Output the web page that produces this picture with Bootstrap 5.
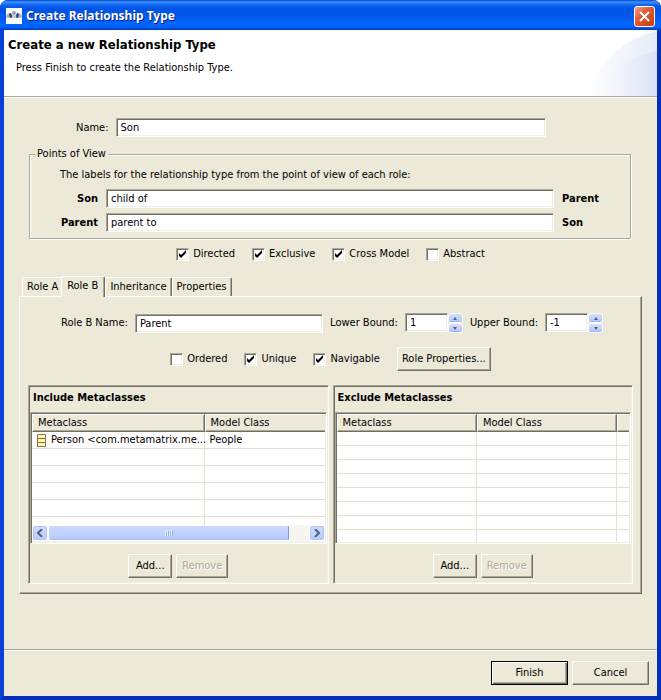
<!DOCTYPE html>
<html lang="en">
<head>
<meta charset="utf-8">
<meta name="viewport" content="width=device-width, initial-scale=1">
<title>Create Relationship Type</title>
<link rel="stylesheet" href="https://cdn.jsdelivr.net/npm/bootstrap@5.3.0/dist/css/bootstrap.min.css">
<style>
:root { --face: #ece9d8; --dark: #716f64; --mid: #aca899; --rule: #e4e1d4; }
body { font: 11px/14px Tahoma, "DejaVu Sans Condensed", "DejaVu Sans", sans-serif; color: #000; background: #fff; }
.dialog-window { background: var(--face); border: 4px solid #0842d4; border-top: 0; border-right-color: #0230b8; border-bottom-color: #0230b8; border-radius: 8px 8px 0 0; }
.title-bar { height: 30px; margin: 0 -4px; padding: 2px 6px 0; border-radius: 8px 8px 0 0; color: #fff;
  background: linear-gradient(#0842c8 0, #3a93ff 2px, #0a63f0 5px, #0054e3 9px, #0058ee 16px, #0066ff 24px, #0162f8 27px, #0038c0 30px); }
.title-bar h1 { font: bold 13px/18px "Noto Sans", "Open Sans", sans-serif; font-size: 12px; text-shadow: 1px 1px #0a1e8c; }
.app-icon { width: 16px; height: 16px; }
.close-button { width: 21px; height: 21px; border: 1px solid #fff; border-radius: 3px; background: linear-gradient(135deg, #f0a48c, #e25a35 40%, #c83a10); }
.banner { height: 68px; padding: 7px 4px; background: #fff; border-bottom: 1px solid #fff; box-shadow: inset 0 -1px var(--mid); }
.banner h2 { font-size: 13px; line-height: 16px; font-weight: bold; }
.banner p { padding-left: 8px; }
.banner-art { right: 0; top: 0; width: 70px; height: 66px; }
.edge { border: 1px solid; border-color: var(--mid) #fff #fff var(--mid); box-shadow: inset 1px 1px var(--dark), inset -1px -1px #f1efe2; }
.field { height: 19px; min-height: 0; padding: 0 4px; font-size: 11px; line-height: 14px; color: #000; background: #fff; border-radius: 0; }
.field:focus { color: #000; border-color: var(--mid) #fff #fff var(--mid); box-shadow: inset 1px 1px var(--dark); }
.name-row { padding: 20px 111px 0 72px; gap: 7px; }
.view-box { margin: 10px 26px 0 25px; padding: 7px 7px 6px 30px; border: 1px solid var(--mid); box-shadow: 1px 1px #fff, inset 1px 1px #fff; }
.view-box legend { float: none; width: auto; margin: 0 0 0 -25px; padding: 0 2px; font-size: 11px; line-height: 14px; background: var(--face); }
.view-grid { display: grid; grid-template-columns: 38px 1fr 61px; gap: 5px 8px; align-items: center; padding-top: 7px; }
.tick { appearance: none; width: 13px; height: 13px; margin: 0; background: #fff center/9px 9px no-repeat; }
.tick:checked { background-image: url("data:image/svg+xml,%3Csvg xmlns='http://www.w3.org/2000/svg' viewBox='0 0 9 9'%3E%3Cpath d='M1 3v3l2 2 5-5V0L3 5z'/%3E%3C/svg%3E"); }
.tick-row { gap: 17px; }
.tick-row label { gap: 4px; }
.tabs { height: 20px; margin: 15px 16px 0; padding-left: 2px; }
.tab { height: 19px; padding: 0 4px; border: 1px solid #fff; border-right: 1px solid var(--dark); border-bottom: 0; border-radius: 2px 2px 0 0; background: var(--face); color: #000; box-shadow: inset -1px 0 var(--mid); }
.tab.active { height: 21px; margin: 0 0 -1px -1px; padding: 0 6px 2px 5px; z-index: 1; }
.tab.before-active { border-right: 0; box-shadow: none; }
.tab-panel { margin: 0 15px; padding: 16px 8px 9px; border: 1px solid; border-color: #fff var(--dark) var(--dark) #fff; box-shadow: inset -1px -1px var(--mid); }
.role-row { padding: 0 30px 0 33px; gap: 7px; }
.bound { width: 43px; }
.spin { width: 15px; height: 10px; border: 1px solid #fff; border-radius: 3px; background: linear-gradient(#d4dffc, #b4c7f8); box-shadow: inset 0 -1px #9db4ee; }
.push { height: 24px; padding: 0 4px; font-size: 11px; line-height: 14px; color: #000; background: var(--face); border: 1px solid; border-color: #fff var(--dark) var(--dark) #fff; border-radius: 0; box-shadow: inset -1px -1px var(--mid); }
.push:hover, .push:active { color: #000; background: var(--face); border-color: #fff var(--dark) var(--dark) #fff; }
.push:disabled { color: var(--mid); opacity: 1; background: var(--face); border-color: #fff var(--dark) var(--dark) #fff; text-shadow: 1px 1px #fff; }
.push.main { border-color: #000; box-shadow: inset 1px 1px #fff, inset -1px -1px var(--dark), inset -2px -2px var(--mid); }
.push.wide { width: 77px; }
.push.add { width: 44px; } .push.remove { width: 52px; }
.role-options { padding-top: 14px; }
.groups { display: grid; grid-template-columns: 1fr 1fr; gap: 4px; margin-top: 14px; }
.group { padding: 2px 1px 5px; min-width: 0; }
.group h3 { margin: 3px 3px 7px; font-size: 11px; line-height: 14px; font-weight: bold; }
.sheet { height: 132px; padding: 1px; background: #fff; overflow: hidden; }
.sheet table { table-layout: fixed; width: 100%; border-collapse: separate; border-spacing: 0; }
.sheet th { height: 18px; padding: 0 0 0 5px; font-weight: normal; line-height: 14px; background: var(--face); border: 1px solid; border-color: #fff var(--dark) var(--dark) #fff; box-shadow: inset -1px -1px var(--mid); }
.sheet th:last-child { border-right: 0; box-shadow: inset 0 -1px var(--mid); }
.sheet td { height: 14px; padding: 0 2px 0 5px; line-height: 13px; border-right: 1px solid var(--rule); border-bottom: 1px solid var(--rule); }
.sheet td:last-child { border-right: 0; }
.sheet.tall td { height: 17px; line-height: 16px; }
.rows { flex: 1; min-height: 0; overflow: hidden; }
.bar { height: 17px; background: #f6f5f0; }
.bar-arrow { width: 16px; height: 16px; border: 1px solid #fff; border-radius: 3px; background: linear-gradient(#d0dcfd, #b8cbf9); box-shadow: inset 0 0 0 1px #b2c4f5; }
.bar-thumb { width: 241px; height: 16px; border: 1px solid #fff; border-right-color: #7d9be0; border-radius: 3px; background: linear-gradient(#cbd9fd, #bccdfb 80%, #a8bdf2); }
.actions { gap: 4px; padding-top: 10px; }
.footer-bar { padding: 11px 8px; gap: 4px; border-top: 1px solid var(--mid); box-shadow: inset 0 1px #fff; }
</style>
<script src="https://cdn.jsdelivr.net/npm/bootstrap@5.3.0/dist/js/bootstrap.bundle.min.js"></script>
</head>
<body>
<main class="dialog-window d-flex flex-column min-vh-100">
  <header class="title-bar d-flex align-items-center">
    <svg class="app-icon flex-shrink-0" viewBox="0 0 16 16" aria-hidden="true"><path fill="#fff" d="M0 0h16v16H0z"/><path fill="#b4bcc6" d="M0 9q0-3 3-4h2l1 5H1zM16 9q0-3-3-4h-2l-1 5h5z"/><circle cx="8" cy="5" r="2" fill="#98a3b0"/><path fill="#c5cbd2" d="M6 7h4v3H6z"/><path fill="#2d437c" d="M4 5q2 0 2 4l-1 1q-2-1-2-3zM12 5q-2 0-2 4l1 1q2-1 2-3z"/></svg>
    <h1 class="flex-grow-1 mb-0 ms-1">Create Relationship Type</h1>
    <button class="close-button p-0 d-flex align-items-center justify-content-center" type="button" aria-label="Close"><svg width="13" height="13" viewBox="0 0 13 13"><path d="M2 2l9 9M11 2l-9 9" stroke="#fff" stroke-width="2"/></svg></button>
  </header>
  <section class="banner position-relative">
    <svg class="banner-art position-absolute" viewBox="0 0 70 66" preserveAspectRatio="none" aria-hidden="true"><defs><linearGradient id="fade"><stop offset="0" stop-color="#fff"/><stop offset="1" stop-color="#e5ebf8"/></linearGradient><linearGradient id="fade2"><stop offset="0" stop-color="#fff" stop-opacity="0"/><stop offset="1" stop-color="#d8e1f5"/></linearGradient></defs><path fill="url(#fade)" d="M0 66Q20 12 70 1v65z"/><path fill="url(#fade2)" d="M0 66Q28 28 70 21v45z"/></svg>
    <h2 class="mb-0 position-relative">Create a new Relationship Type</h2>
    <p class="mb-0 mt-1 pt-1 position-relative">Press Finish to create the Relationship Type.</p>
  </section>
  <form class="d-flex flex-column flex-grow-1">
    <div class="name-row d-flex align-items-center">
      <label for="name">Name:</label>
      <input class="form-control field edge" id="name" type="text" value="Son">
    </div>
    <fieldset class="view-box">
      <legend>Points of View</legend>
      <p class="mb-0">The labels for the relationship type from the point of view of each role:</p>
      <div class="view-grid fw-bold">
        <label class="text-end" for="viewA">Son</label><input class="form-control field edge" id="viewA" type="text" value="child of"><span>Parent</span>
        <label class="text-end" for="viewB">Parent</label><input class="form-control field edge" id="viewB" type="text" value="parent to"><span>Son</span>
      </div>
    </fieldset>
    <div class="tick-row d-flex justify-content-center mt-2">
      <label class="d-flex align-items-center" for="directed"><input class="tick edge" id="directed" type="checkbox" checked>Directed</label>
      <label class="d-flex align-items-center" for="exclusive"><input class="tick edge" id="exclusive" type="checkbox" checked>Exclusive</label>
      <label class="d-flex align-items-center" for="cross"><input class="tick edge" id="cross" type="checkbox" checked>Cross Model</label>
      <label class="d-flex align-items-center" for="abstract"><input class="tick edge" id="abstract" type="checkbox">Abstract</label>
    </div>
    <div class="tabs d-flex align-items-end" role="tablist">
      <button class="tab before-active" type="button" role="tab">Role A</button>
      <button class="tab active position-relative" type="button" role="tab" aria-selected="true">Role B</button>
      <button class="tab" type="button" role="tab">Inheritance</button>
      <button class="tab" type="button" role="tab">Properties</button>
    </div>
    <section class="tab-panel">
      <div class="role-row d-flex align-items-center text-nowrap">
        <label for="roleName">Role B Name:</label>
        <input class="form-control field edge" id="roleName" type="text" value="Parent">
        <label for="lower">Lower Bound:</label>
        <div class="d-flex flex-shrink-0">
          <input class="form-control field edge bound" id="lower" type="text" inputmode="numeric" value="1">
          <div class="d-flex flex-column"><button class="spin p-0 d-flex align-items-center justify-content-center" type="button" aria-label="Raise lower bound"><svg width="4" height="3" viewBox="0 0 4 3"><path fill="#4d6185" d="M0 3l2-3 2 3z"/></svg></button><button class="spin p-0 d-flex align-items-center justify-content-center" type="button" aria-label="Reduce lower bound"><svg width="4" height="3" viewBox="0 0 4 3"><path fill="#4d6185" d="M0 0l2 3 2-3z"/></svg></button></div>
        </div>
        <label for="upper">Upper Bound:</label>
        <div class="d-flex flex-shrink-0">
          <input class="form-control field edge bound" id="upper" type="text" inputmode="numeric" value="-1">
          <div class="d-flex flex-column"><button class="spin p-0 d-flex align-items-center justify-content-center" type="button" aria-label="Raise upper bound"><svg width="4" height="3" viewBox="0 0 4 3"><path fill="#4d6185" d="M0 3l2-3 2 3z"/></svg></button><button class="spin p-0 d-flex align-items-center justify-content-center" type="button" aria-label="Reduce upper bound"><svg width="4" height="3" viewBox="0 0 4 3"><path fill="#4d6185" d="M0 0l2 3 2-3z"/></svg></button></div>
        </div>
      </div>
      <div class="tick-row role-options d-flex align-items-center justify-content-center">
        <label class="d-flex align-items-center" for="ordered"><input class="tick edge" id="ordered" type="checkbox">Ordered</label>
        <label class="d-flex align-items-center" for="unique"><input class="tick edge" id="unique" type="checkbox" checked>Unique</label>
        <label class="d-flex align-items-center" for="navigable"><input class="tick edge" id="navigable" type="checkbox" checked>Navigable</label>
        <button class="btn push" type="button">Role Properties...</button>
      </div>
      <div class="groups">
        <section class="group edge">
          <h3>Include Metaclasses</h3>
          <div class="sheet tall edge d-flex flex-column">
            <div class="rows">
              <table>
                <colgroup><col style="width:59%"><col></colgroup>
                <thead><tr><th scope="col">Metaclass</th><th scope="col">Model Class</th></tr></thead>
                <tbody>
                  <tr><td><div class="d-flex align-items-center"><svg class="flex-shrink-0 me-1" width="10" height="13" viewBox="0 0 10 13" aria-hidden="true"><path fill="#fff6b8" stroke="#86713a" d="M.5.5h8v12h-8zM.5 4.5h8M.5 8.5h8"/></svg><span class="text-nowrap">Person &lt;com.metamatrix.me...</span></div></td><td>People</td></tr>
                  <tr><td></td><td></td></tr><tr><td></td><td></td></tr><tr><td></td><td></td></tr><tr><td></td><td></td></tr><tr><td></td><td></td></tr>
                </tbody>
              </table>
            </div>
            <div class="bar d-flex flex-shrink-0">
              <button class="bar-arrow p-0 d-flex align-items-center justify-content-center" type="button" aria-label="Scroll left"><svg width="8" height="8" viewBox="0 0 8 8"><path d="M6 0L2 4l4 4" fill="none" stroke="#4d6185" stroke-width="2"/></svg></button>
              <div class="bar-thumb d-flex align-items-center justify-content-center"><svg width="8" height="6" viewBox="0 0 8 6"><path d="M.5 0v6M2.5 0v6M4.5 0v6M6.5 0v6" stroke="#eef4fe"/><path d="M1.5 1v5M3.5 1v5M5.5 1v5M7.5 1v5" stroke="#8cb0f8"/></svg></div>
              <button class="bar-arrow p-0 ms-auto d-flex align-items-center justify-content-center" type="button" aria-label="Scroll right"><svg width="8" height="8" viewBox="0 0 8 8"><path d="M2 0l4 4-4 4" fill="none" stroke="#4d6185" stroke-width="2"/></svg></button>
            </div>
          </div>
          <div class="actions d-flex justify-content-center"><button class="btn push add" type="button">Add...</button><button class="btn push remove" type="button" disabled>Remove</button></div>
        </section>
        <section class="group edge">
          <h3>Exclude Metaclasses</h3>
          <div class="sheet edge d-flex flex-column">
            <div class="rows">
              <table>
                <colgroup><col style="width:48%"><col style="width:48%"><col></colgroup>
                <thead><tr><th scope="col">Metaclass</th><th scope="col">Model Class</th><th></th></tr></thead>
                <tbody>
                  <tr><td></td><td></td><td></td></tr><tr><td></td><td></td><td></td></tr><tr><td></td><td></td><td></td></tr><tr><td></td><td></td><td></td></tr><tr><td></td><td></td><td></td></tr><tr><td></td><td></td><td></td></tr><tr><td></td><td></td><td></td></tr><tr><td></td><td></td><td></td></tr>
                </tbody>
              </table>
            </div>
          </div>
          <div class="actions d-flex justify-content-center"><button class="btn push add" type="button">Add...</button><button class="btn push remove" type="button" disabled>Remove</button></div>
        </section>
      </div>
    </section>
    <footer class="footer-bar d-flex justify-content-end mt-auto">
      <button class="btn push main wide" type="submit">Finish</button>
      <button class="btn push wide" type="button">Cancel</button>
    </footer>
  </form>
</main>
</body>
</html>
